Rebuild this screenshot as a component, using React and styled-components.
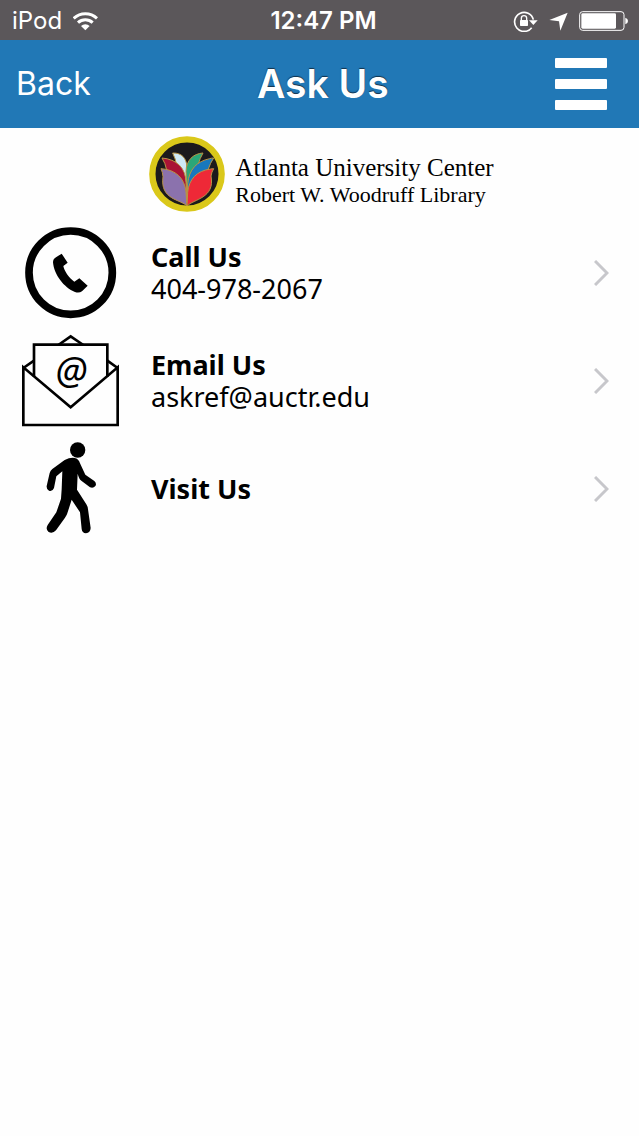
import React from 'react';
import styled, { createGlobalStyle } from 'styled-components';

const GlobalStyle = createGlobalStyle`
  body {
    margin: 0;
    background-color: #fefefe;
  }

  * {
    box-sizing: border-box;
  }
`;

const Page = styled.div`
  min-height: 100vh;
  background-color: #fefefe;
  color: #000;
  font-family: 'Noto Sans', sans-serif;
`;

const StatusBar = styled.div`
  display: grid;
  grid-template-columns: 1fr auto 1fr;
  align-items: center;
  height: 40px;
  padding: 2px 4px 0 12px;
  background-color: #5b575a;
  color: #fff;
  font-family: Inter, sans-serif;
  font-size: 24px;
  line-height: 28px;
`;

const StatusGroup = styled.div`
  display: flex;
  align-items: center;
  justify-content: ${(props) => (props.$end ? 'flex-end' : 'flex-start')};
  gap: 11px;
  padding-right: ${(props) => (props.$end ? '6px' : '0')};
`;

const Time = styled.time`
  font-weight: 600;
`;

const Header = styled.header`
  display: flex;
  align-items: center;
  justify-content: space-between;
  height: 88px;
  padding: 0 32px 0 16px;
  background-color: #2178b6;
  color: #fff;
  font-family: Inter, sans-serif;
`;

const BackButton = styled.button`
  padding: 0;
  border: none;
  background: none;
  color: #fff;
  font-family: inherit;
  font-size: 32px;
  line-height: 40px;
  cursor: pointer;
`;

const Title = styled.h1`
  margin: 0;
  font-size: 39px;
  font-weight: 600;
  line-height: 48px;
  text-shadow: 0 -1px 1px #12314a;
`;

const MenuButton = styled.button`
  display: flex;
  flex-direction: column;
  gap: 11px;
  width: 52px;
  padding: 0;
  border: none;
  background: none;
  cursor: pointer;
`;

const MenuBar = styled.span`
  width: 100%;
  height: 10px;
  border-radius: 1px;
  background-color: #fff;
`;

const Brand = styled.div`
  display: flex;
  align-items: center;
  justify-content: center;
  gap: 10px;
  height: 91px;
  padding-left: 4px;
`;

const BrandText = styled.div`
  padding-top: 14px;
  color: #000;
  font-family: 'Liberation Serif', serif;
  line-height: 27px;
`;

const BrandName = styled.div`
  font-size: 25px;
`;

const LibraryName = styled.div`
  font-size: 22px;
`;

const ContactList = styled.ul`
  margin: 0;
  padding: 0;
  list-style: none;
`;

const ContactLink = styled.a`
  display: flex;
  align-items: center;
  gap: 20px;
  height: 108px;
  padding: 0 30px 0 11px;
  color: #000;
  text-decoration: none;
`;

const ContactText = styled.div`
  flex: 1;
  font-size: 27px;
  line-height: 32px;
`;

const Label = styled.div`
  font-weight: 700;
`;

const WifiIcon = () => (
  <svg width="25" height="20" viewBox="217 30 75 60" fill="none" stroke="#fff" strokeWidth="9">
    <path d="M219 52A51 51 0 0 1 289 52" />
    <path d="M232 65A32 32 0 0 1 276 65" />
    <path d="M254 88L241 75A19 19 0 0 1 267 75Z" fill="#fff" stroke="none" />
  </svg>
);

const RotationLockIcon = () => (
  <svg width="25" height="21" viewBox="579 29 75 63" fill="none" stroke="#fff">
    <path d="M640 55A28.500 28.500 0 1 0 635 79" strokeWidth="5" />
    <path d="M627 57H653L640 71Z" fill="#fff" stroke="none" />
    <path d="M604 58V51A8 8 0 0 1 620 51V58" strokeWidth="4" />
    <rect x="600" y="56" width="24" height="18" rx="2" fill="#fff" stroke="none" />
  </svg>
);

const LocationIcon = () => (
  <svg width="19" height="19" viewBox="686 34 57 57">
    <path d="M742 36L720 90L716 62L687 58Z" fill="#fff" />
  </svg>
);

const BatteryIcon = () => (
  <svg width="50" height="22" viewBox="776 29 150 66" fill="#fff">
    <rect x="778" y="34" width="133" height="56" rx="9" fill="none" stroke="#fff" strokeWidth="3" />
    <rect x="783" y="39" width="104" height="46" rx="4" />
    <path d="M915 52Q923 54 923 62Q923 70 915 72Z" />
  </svg>
);

const BrandLogo = () => (
  <svg width="76" height="76" viewBox="6 6 228 228" stroke="#b99445" strokeWidth="3">
    <circle cx="120" cy="120" r="104" fill="#1b191c" stroke="#dac81a" strokeWidth="19" />
    <path d="M77 57C103 56 119 71 120 101V190C105 150 85 125 89 95Q86 74 77 57Z" fill="#cfe9f5" />
    <path d="M168 57C139 59 118 78 117 112L120 190C142 160 158 125 153 93Q159 72 168 57Z" fill="#2aa678" />
    <path d="M45 72C89 76 116 101 117 145L120 205C85 180 60 145 59 108Q55 87 45 72Z" fill="#a91335" />
    <path d="M200 72Q194 72 188 74C150 82 126 105 122 150L120 205C158 180 182 145 183 108Q190 86 200 72Z" fill="#1878bd" />
    <path d="M42 104C86 107 113 132 117 174L120 216C102 196 38 198 48 128Q47 115 42 104Z" fill="#8b72ad" />
    <path d="M200 104Q195 104 191 105C149 110 126 136 122 175L120 216C140 195 205 193 192 126Q194 114 200 104Z" fill="#ee2937" />
  </svg>
);

const PhoneIcon = () => (
  <svg width="120" height="108" viewBox="3 -3 360 324">
    <circle cx="182" cy="158" r="125" fill="none" stroke="#000" strokeWidth="23" />
    <path d="M155 101L173 128L160 138C163 153 176 173 193 185L208 175L233 197L216 214Q207 220 195 216C162 203 132 164 129 127Q129 117 138 112Z" />
  </svg>
);

const EmailIcon = () => (
  <svg width="120" height="108" viewBox="3 -3 360 324">
    <g fill="none" stroke="#000" strokeWidth="8">
      <path d="M40 118V291H323V118L182 238Z" />
      <path d="M72 146V50H292V146" />
      <path d="M145 51L182 25L220 51M40 120L72 98M323 120L292 98" />
    </g>
    <text x="184" y="169" textAnchor="middle" fontFamily="Noto Sans, sans-serif" fontStyle="italic" fontSize="112">
      @
    </text>
  </svg>
);

const WalkIcon = () => (
  <svg width="120" height="108" viewBox="3 -3 360 324">
    <circle cx="203" cy="42" r="23" />
    <path d="M164 72Q180 64 194 66Q206 68 210 82L226 116L253 135Q261 143 256 150Q250 158 240 154L214 134Q207 129 203 113L201 161L229 205Q233 211 234 220L242 276Q241 291 228 292Q216 291 215 279L210 229L185 191L172 232Q170 239 165 245L138 283Q127 295 115 287Q106 279 113 267L139 229L153 188L155 160L157 106L139 121L132 156Q128 167 117 164Q109 160 110 150L119 111Q121 104 127 99Z" />
  </svg>
);

const Chevron = () => (
  <svg width="15" height="26" viewBox="0 0 15 26" fill="none" stroke="#c7c7cb" strokeWidth="3">
    <path d="M1 1L13 13L1 25" />
  </svg>
);

const contacts = [
  { label: 'Call Us', detail: '404-978-2067', href: 'tel:404-978-2067', icon: <PhoneIcon /> },
  { label: 'Email Us', detail: 'askref@auctr.edu', href: 'mailto:askref@auctr.edu', icon: <EmailIcon /> },
  { label: 'Visit Us', href: '#visit', icon: <WalkIcon /> },
];

const App = () => {
  return (
    <Page>
      <GlobalStyle />
      <StatusBar>
        <StatusGroup>
          iPod
          <WifiIcon />
        </StatusGroup>
        <Time>12:47 PM</Time>
        <StatusGroup $end>
          <RotationLockIcon />
          <LocationIcon />
          <BatteryIcon />
        </StatusGroup>
      </StatusBar>
      <Header>
        <BackButton type="button">Back</BackButton>
        <Title>Ask Us</Title>
        <MenuButton type="button" aria-label="Menu">
          <MenuBar />
          <MenuBar />
          <MenuBar />
        </MenuButton>
      </Header>
      <main>
        <Brand>
          <BrandLogo />
          <BrandText>
            <BrandName>Atlanta University Center</BrandName>
            <LibraryName>Robert W. Woodruff Library</LibraryName>
          </BrandText>
        </Brand>
        <ContactList>
          {contacts.map((contact) => (
            <li key={contact.label}>
              <ContactLink href={contact.href}>
                {contact.icon}
                <ContactText>
                  <Label>{contact.label}</Label>
                  {contact.detail && <div>{contact.detail}</div>}
                </ContactText>
                <Chevron />
              </ContactLink>
            </li>
          ))}
        </ContactList>
      </main>
    </Page>
  );
};

export default App;
